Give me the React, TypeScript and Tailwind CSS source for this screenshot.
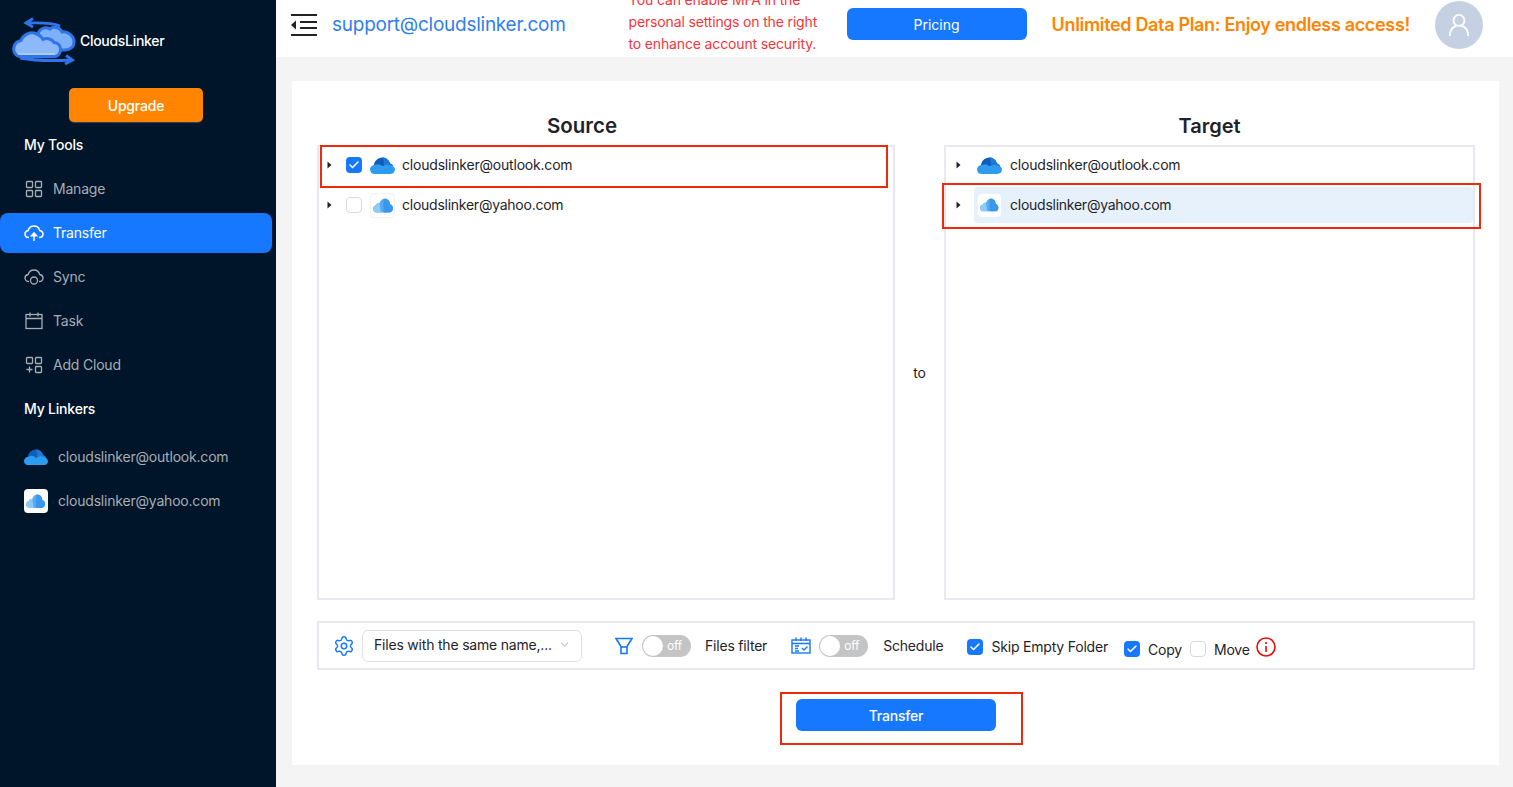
import React from "react";
import { Check, ChevronDown, Settings } from "lucide-react";

function Logo() {
  return (
    <svg width="64" height="50" viewBox="12 16 64 50" fill="none">
      <path d="M60 26C50 22 40 23 27 23" stroke="#2f74e8" strokeWidth="2.800" />
      <path d="M33 18.500L26 23L33 27" stroke="#2f74e8" strokeWidth="2.800" />
      <path d="M20 58C36 61 52 61 71 60" stroke="#2f74e8" strokeWidth="2.800" />
      <path d="M66 55.500L72.500 60L65 64" stroke="#2f74e8" strokeWidth="2.800" />
      <path d="M38 34C39 29 45 26 50 29C53 26 60 27 62 32C68 31 74 36 74 42C74 47 70 50 65 50H54Z" fill="#7db1f7" stroke="#2f74e8" strokeWidth="3" />
      <path d="M21 56.500C15 56.500 13 51 14 47C15 43 18 41 21 40.500C23 35 29 32 34 33C38 34 41 36 43 39.500C47 37.500 52 39 54 42.500C58 42.500 61 46 60.500 50.500C60 54.500 57 56.500 54 56.500Z" fill="#8db9f8" stroke="#2f74e8" strokeWidth="3" />
      <path d="M18 54H55" stroke="#c9deff" strokeWidth="1" />
    </svg>
  );
}

function OutlookCloud({ w = 25 }: { w?: number }) {
  return (
    <svg width={w} height={w * 0.68} viewBox="0 0 25 17">
      <path d="M4 9C4 4 8 .5 12.500 .5C16 .5 19 3 20 6.500C22 7 23 8 23 10Z" fill="#0f5dbb" />
      <path d="M12.500 .5C16 .5 19 3 20 6.500C22 7 23 8 23 10L14 9C14 6 13.500 3 12.500 .5Z" fill="#1c79d6" />
      <path d="M0 12.500C0 10 2 8 5 8C7.500 6.500 10.500 7 12.500 9.500C15 7.500 19 7 21 8.500C23.500 9 25 10.800 25 12.800C25 15 23 17 20.500 17H4.500C2 17 0 15 0 12.500Z" fill="#2d9bf0" />
    </svg>
  );
}

function YahooCloud({ size = 24, tile = false }: { size?: number; tile?: boolean }) {
  return (
    <span
      className={
        tile
          ? "flex shrink-0 items-center justify-center rounded-[4px] bg-white"
          : "flex shrink-0 items-center justify-center rounded-[4px] border border-[#f2f2f2] bg-white"
      }
      style={{ width: size, height: size }}
    >
      <svg width={size * 0.8} height={size * 0.6} viewBox="0 0 20 15">
        <path d="M4 14.500C1.500 14.500 0 12.800 0 10.800C0 9 1.300 7.500 3 7.200C3.500 5.500 5 4.800 6.500 5.200C7.500 2 10 0.500 12 0.500C15 0.500 17 3 17 6.300C18.800 6.800 20 8.500 20 10.500C20 12.800 18.300 14.500 16 14.500Z" fill="#56aaf3" />
        <path d="M10.500 1C13 .500 17 2 17 6.300C18.800 6.800 20 8.500 20 10.500C20 12.800 18.300 14.500 16 14.500H10.500Z" fill="#3a97ec" />
        <path d="M4 14.500C1.500 14.500 0 12.800 0 10.800C0 9 1.300 7.500 3 7.200C3.500 5.500 5 4.800 6.500 5.200L8 14.500Z" fill="#8ccbf8" />
      </svg>
    </span>
  );
}

function GridIcon({ plus = false }: { plus?: boolean }) {
  return (
    <svg width="18" height="18" viewBox="0 0 18 18" fill="none" stroke="currentColor" strokeWidth="1.300">
      <rect x="1.500" y="1.500" width="6" height="6" rx=".8" />
      <rect x="10.500" y="1.500" width="6" height="6" rx=".8" />
      {plus ? <path d="M4.500 10.500v6M1.500 13.500h6" /> : <rect x="1.500" y="10.500" width="6" height="6" rx=".8" />}
      <rect x="10.500" y="10.500" width="6" height="6" rx=".8" />
    </svg>
  );
}

function UploadIcon() {
  return (
    <svg width="20" height="18" viewBox="0 0 20 18" fill="none" stroke="currentColor" strokeWidth="1.500">
      <path d="M5 13.500C2.500 13.500 1 11.800 1 10C1 8 2.500 6.800 4.200 6.500C5 3.500 7.500 2 10 2C12.800 2 15 4 15.700 6.500C17.500 6.800 19 8 19 10C19 11.800 17.500 13.500 15 13.500" />
      <path d="M10 17V9.500" />
      <path d="M7.500 11.800L10 9L12.500 11.800Z" fill="currentColor" />
    </svg>
  );
}

function SyncIcon() {
  return (
    <svg width="20" height="18" viewBox="0 0 20 18" fill="none" stroke="currentColor" strokeWidth="1.300">
      <path d="M5 13.500C2.500 13.500 1 11.800 1 10C1 8 2.500 6.800 4.200 6.500C5 3.500 7.500 2 10 2C12.800 2 15 4 15.700 6.500C17.500 6.800 19 8 19 10C19 11.800 17.500 13.500 15 13.500" />
      <circle cx="10" cy="12.500" r="3.500" />
    </svg>
  );
}

function CalendarIcon() {
  return (
    <svg width="18" height="18" viewBox="0 0 18 18" fill="none" stroke="currentColor" strokeWidth="1.300">
      <rect x="1" y="2.500" width="16" height="14" />
      <path d="M1 6.500h16M5 .5v4M13 .5v4" />
    </svg>
  );
}

function NavItem({ icon, label, active = false }: { icon: React.ReactNode; label: string; active?: boolean }) {
  return (
    <div className="flex h-11 items-center">
      <div
        className={
          active
            ? "flex h-10 w-[272px] items-center rounded-[8px] bg-[#1677ff] pl-6 text-white"
            : "flex h-10 w-[272px] items-center pl-6 text-[#a6adb4]"
        }
      >
        <span className="flex w-5 items-center justify-center">{icon}</span>
        <span className="mb-[2px] ml-[9px] text-[14px]">{label}</span>
      </div>
    </div>
  );
}

function Caret() {
  return (
    <svg width="5" height="8" viewBox="0 0 5 8" className="shrink-0">
      <path d="M0.500 0.500L4.500 4L0.500 7.500Z" fill="#1f2329" />
    </svg>
  );
}

function Box({ checked }: { checked: boolean }) {
  return checked ? (
    <span className="flex h-4 w-4 shrink-0 items-center justify-center rounded-[4px] bg-[#1677ff]">
      <Check size={12} strokeWidth={3} color="#ffffff" />
    </span>
  ) : (
    <span className="block h-4 w-4 shrink-0 rounded-[4px] border border-[#d9d9d9] bg-white" />
  );
}

function Toggle() {
  return (
    <span className="relative flex h-[22px] w-[49px] shrink-0 items-center justify-end rounded-full bg-[#c4c4c4] pr-[9px] text-[12px] text-white">
      off
      <span className="absolute left-[1px] top-[1px] h-5 w-5 rounded-full bg-white" />
    </span>
  );
}

export default function App() {
  const font = { fontFamily: "Inter, 'Noto Sans', sans-serif" };
  return (
    <div className="flex h-[787px] w-[1513px] overflow-hidden bg-[#f4f4f4] text-[14px] tracking-[-0.2px] text-[#1f2329]" style={font}>
      <aside className="h-full w-[276px] shrink-0 bg-[#001529]">
        <div className="flex h-[88px] items-start pl-3 pt-4">
          <Logo />
          <span className="ml-1 mt-[14px] text-[14px] font-medium tracking-[-0.3px] text-white">CloudsLinker</span>
        </div>
        <div className="ml-[69px] flex h-[34px] w-[134px] items-center justify-center rounded-[5px] bg-[#ff8400] text-[14px] font-medium text-white shadow-[0_1px_1px_rgba(255,255,255,0.2)]">
          Upgrade
        </div>
        <div className="flex h-[45px] items-center pl-6 text-[14px] font-medium text-white">My Tools</div>
        <NavItem icon={<GridIcon />} label="Manage" />
        <NavItem icon={<UploadIcon />} label="Transfer" active />
        <NavItem icon={<SyncIcon />} label="Sync" />
        <NavItem icon={<CalendarIcon />} label="Task" />
        <NavItem icon={<GridIcon plus />} label="Add Cloud" />
        <div className="flex h-11 items-center pb-[2px] pl-6 text-[14px] font-medium text-white">My Linkers</div>
        <div className="flex h-12 items-center pl-6 pt-1 text-[#a6adb4]">
          <OutlookCloud w={24} />
          <span className="mb-[2px] ml-[10px]">cloudslinker@outlook.com</span>
        </div>
        <div className="flex h-11 items-center pl-6 text-[#a6adb4]">
          <YahooCloud size={24} tile />
          <span className="mb-[2px] ml-[10px]">cloudslinker@yahoo.com</span>
        </div>
      </aside>

      <main className="min-w-0 flex-1">
        <header className="flex h-[57px] items-start overflow-hidden bg-white">
          <svg width="28" height="24" viewBox="0 0 28 24" className="ml-[14px] mt-[13px] shrink-0" fill="none" stroke="#222222" strokeWidth="2.200">
            <path d="M1 2h26M10 9h17M10 15h17M1 22h26" />
            <path d="M6 7.500L1 12L6 16.500Z" fill="#222222" stroke="none" />
          </svg>
          <span className="ml-[14px] mt-[11px] whitespace-nowrap text-[19px] leading-7 tracking-[-0.25px] text-[#2f80ed]">support@cloudslinker.com</span>
          <p className="ml-[63px] mt-[-11px] w-[200px] shrink-0 text-[14px] leading-[22px] tracking-[-0.15px] text-[#f5353b]">
            You can enable MFA in the personal settings on the right to enhance account security.
          </p>
          <div className="ml-[18px] mt-2 flex h-8 w-[180px] shrink-0 items-center justify-center rounded-[6px] bg-[#1677ff] text-[14px] tracking-normal text-white">
            Pricing
          </div>
          <span className="ml-[25px] mt-[11px] whitespace-nowrap text-[18px] font-semibold leading-7 tracking-[-0.33px] text-[#ff8400]">
            Unlimited Data Plan: Enjoy endless access!
          </span>
          <div className="ml-[25px] mt-[1px] flex h-12 w-12 shrink-0 items-center justify-center rounded-full bg-[#c5d1e2]">
            <svg width="22" height="24" viewBox="0 0 24 26" fill="none" stroke="#ffffff" strokeWidth="2">
              <circle cx="12" cy="8" r="6" />
              <path d="M2 25C2 18 6 15 9 14M22 25C22 18 18 15 15 14" />
            </svg>
          </div>
        </header>

        <section className="ml-4 mt-6 h-[684px] w-[1207px] bg-white pl-[25px] pr-6 pt-7">
          <div className="flex">
            <div className="w-[578px]">
              <h2 className="flex h-9 items-start justify-center pr-12 pt-[1px] text-[20.500px] font-semibold leading-8 tracking-normal">Source</h2>
              <div className="relative flex h-[455px] flex-col gap-1 border-2 border-[#e8e8f0]">
                <div className="flex h-9 items-center pl-2">
                  <Caret />
                  <span className="ml-[14px]"><Box checked /></span>
                  <span className="ml-2"><OutlookCloud /></span>
                  <span className="mb-[2px] ml-[7px]">cloudslinker@outlook.com</span>
                </div>
                <div className="flex h-9 items-center pl-2">
                  <Caret />
                  <span className="ml-[14px]"><Box checked={false} /></span>
                  <span className="ml-2"><YahooCloud size={25} /></span>
                  <span className="mb-[2px] ml-[7px] tracking-[-0.25px]">cloudslinker@yahoo.com</span>
                </div>
                <div className="absolute left-[1px] top-[-2px] h-[43px] w-[568px] border-2 border-[#ef2a0c]" />
              </div>
            </div>
            <div className="flex w-[49px] items-center justify-center pt-9 text-[14px]">to</div>
            <div className="w-[531px]">
              <h2 className="flex h-9 items-start justify-center pt-[1px] text-[20px] font-semibold leading-8 tracking-normal">Target</h2>
              <div className="relative flex h-[455px] flex-col gap-1 border-2 border-[#e8e8f0]">
                <div className="flex h-9 items-center pl-[10px]">
                  <Caret />
                  <span className="ml-[16px] flex w-[25px] justify-center"><OutlookCloud /></span>
                  <span className="mb-[2px] ml-2">cloudslinker@outlook.com</span>
                </div>
                <div className="flex h-9 items-center pl-[10px]">
                  <Caret />
                  <div className="ml-[13px] flex h-9 flex-1 items-center rounded-[4px] bg-[#e6f1fc] pl-[4px]">
                    <YahooCloud size={23} tile />
                    <span className="mb-[2px] ml-[9px] tracking-[-0.25px]">cloudslinker@yahoo.com</span>
                  </div>
                </div>
                <div className="absolute left-[-4px] top-[36px] h-[46px] w-[539px] border-2 border-[#ef2a0c]" />
              </div>
            </div>
          </div>

          <div className="mt-[21px] flex h-[49px] w-[1158px] items-center border-2 border-[#e8e8f0] pl-[14px]">
            <Settings size={22} strokeWidth={1.600} color="#1677ff" className="shrink-0" />
            <div className="ml-[7px] flex h-8 w-[220px] shrink-0 items-center justify-between rounded-[6px] border border-[#e3e0de] pb-[2px] pl-[11px] pr-[10px]">
              <span className="whitespace-nowrap">Files with the same name,...</span>
              <ChevronDown size={13} color="#c4c4c4" />
            </div>
            <svg width="18" height="18" viewBox="0 0 18 18" fill="none" stroke="#1677ff" strokeWidth="1.600" className="ml-[33px] shrink-0">
              <path d="M1 1.500H17L12 9.500V16.500H6V9.500Z" />
              <path d="M6 10H12" />
            </svg>
            <span className="ml-[9px]"><Toggle /></span>
            <span className="ml-[14px] whitespace-nowrap">Files filter</span>
            <svg width="20" height="17" viewBox="0 0 20 17" fill="none" stroke="#1677ff" strokeWidth="1.400" className="ml-6 shrink-0">
              <rect x="1" y="3" width="18" height="13" />
              <path d="M1 6.500H19M5 .5V4M10 .5V4M15 .5V4M4 9H8M4 11.500H7M4 14H8M11 11L13 13L16.500 9.500" />
            </svg>
            <span className="ml-2"><Toggle /></span>
            <span className="ml-[15px] whitespace-nowrap">Schedule</span>
            <span className="ml-6 mt-[2px] flex items-center gap-2 whitespace-nowrap"><Box checked />Skip Empty Folder</span>
            <span className="ml-4 mt-[7px] flex items-center gap-2 whitespace-nowrap"><Box checked />Copy</span>
            <span className="ml-2 mt-[7px] flex items-center gap-2 whitespace-nowrap"><Box checked={false} />Move</span>
            <svg width="20" height="20" viewBox="0 0 20 20" fill="none" stroke="#e60f0f" strokeWidth="1.600" className="ml-[6px] mt-[3px] shrink-0">
              <circle cx="10" cy="10" r="9" />
              <path d="M10 9V15M10 5V7" />
            </svg>
          </div>

          <div className="relative mx-auto mt-[29px] h-8 w-[200px]">
            <div className="flex h-8 w-[200px] items-center justify-center rounded-[6px] bg-[#1677ff] text-[14px] font-medium text-white">
              Transfer
            </div>
            <div className="absolute left-[-16px] top-[-7px] h-[53px] w-[243px] border-2 border-[#ef2a0c]" />
          </div>
        </section>
      </main>
    </div>
  );
}
